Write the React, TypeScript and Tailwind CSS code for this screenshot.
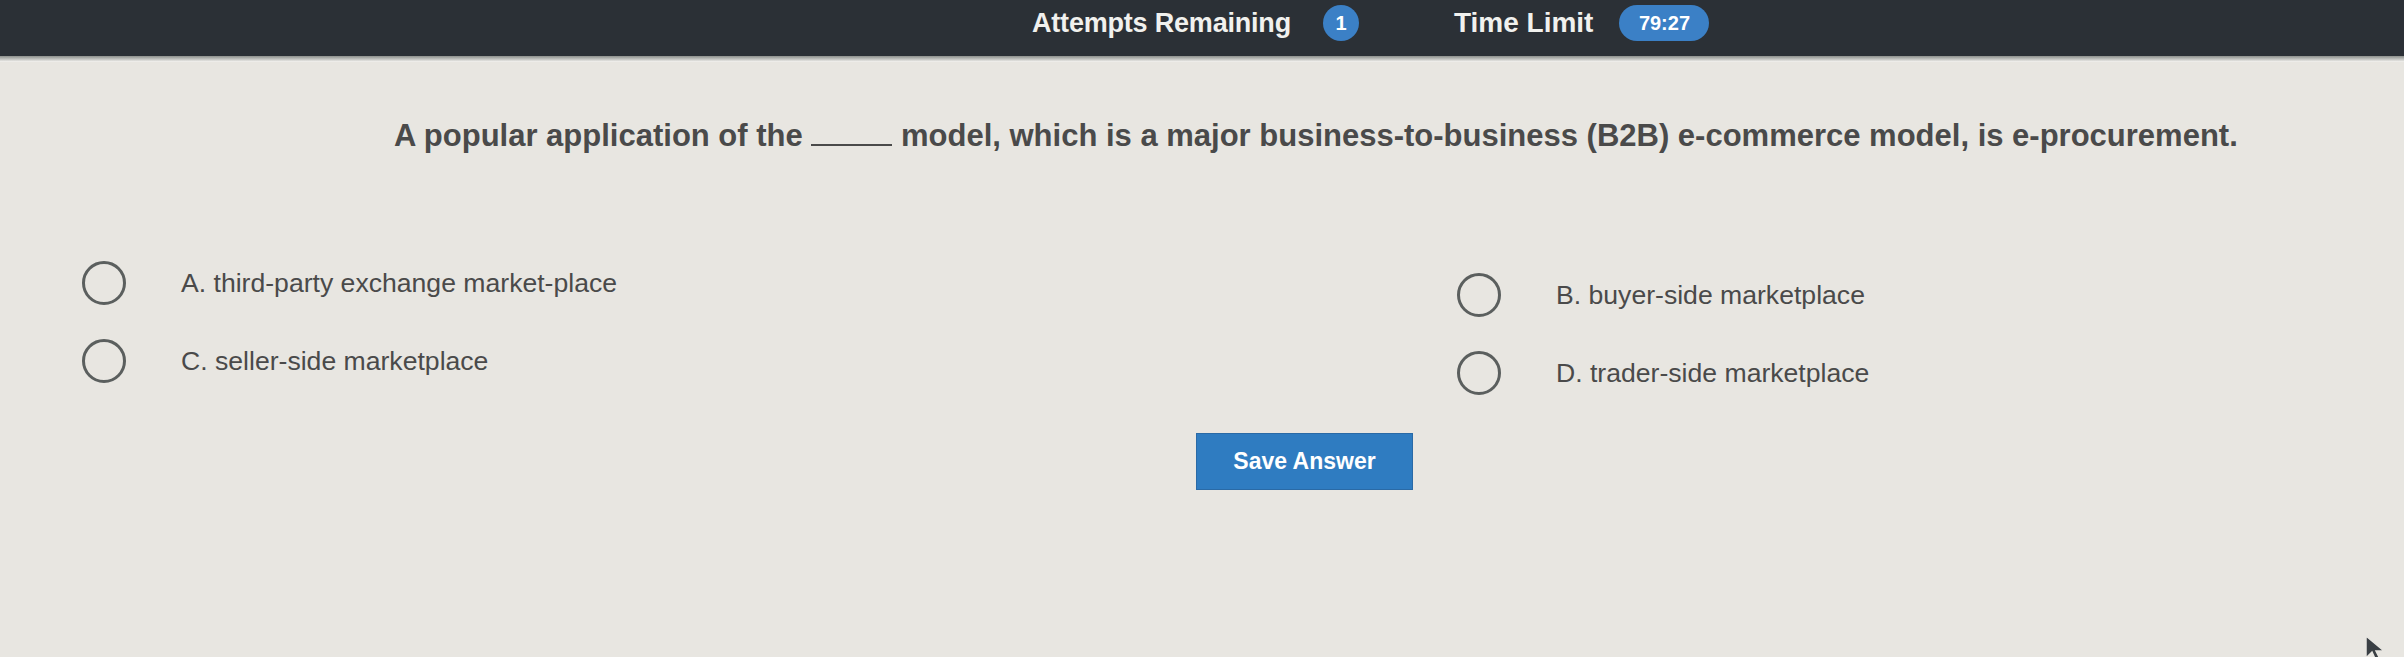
import React from 'react';

const font = { fontFamily: '"Liberation Sans", Arial, sans-serif' };

function Radio() {
  return <span className="inline-block w-[44px] h-[44px] rounded-full border-[3px] border-[#5b5f5e] shrink-0" />;
}

function Option({ label }: { label: string }) {
  return (
    <label className="flex items-center gap-[55px] h-[44px]">
      <Radio />
      <span className="text-[26.6px] text-[#4a4a4a] leading-none">{label}</span>
    </label>
  );
}

export default function App() {
  return (
    <div className="relative w-[2404px] h-[657px] overflow-hidden bg-[#e8e6e1]" style={font}>
      {/* Header: attempts + timer */}
      <div className="h-[56px] bg-[#2b3036] flex items-center pl-[1032px] pb-[10px]">
        <span className="text-[27px] font-bold text-[#f1f1ee] tracking-[-0.2px]">Attempts Remaining</span>
        <span className="ml-[32px] w-[36px] h-[36px] rounded-full bg-[#3b80c6] text-white text-[20px] font-bold flex items-center justify-center">1</span>
        <span className="ml-[95px] text-[28px] font-bold text-[#f1f1ee]">Time Limit</span>
        <span className="ml-[26px] w-[90px] h-[36px] rounded-full bg-[#3b80c6] text-white text-[20px] font-bold flex items-center justify-center">79:27</span>
      </div>
      <div className="h-[6px] bg-gradient-to-b from-[#8c8f8c] to-[#f6f5f2]" />

      {/* Question */}
      <div className="pl-[394px] pt-[58px]">
        <p className="text-[31px] font-bold text-[#4a4a4a] leading-none">
          A popular application of the <span className="inline-block w-[81px] border-b-2 border-[#4a4a4a]" /> model, which is a major business-to-business (B2B) e-commerce model, is e-procurement.
        </p>
      </div>

      {/* Options */}
      <div className="grid grid-cols-[1373px_1fr] pl-[82px] pt-[110px]">
        <div className="flex flex-col gap-[34px]">
          <Option label="A. third-party exchange market-place" />
          <Option label="C. seller-side marketplace" />
        </div>
        <div className="flex flex-col gap-[34px] pt-[12px] pl-[2px]">
          <Option label="B. buyer-side marketplace" />
          <Option label="D. trader-side marketplace" />
        </div>
      </div>

      {/* Save */}
      <div className="flex pl-[1196px] pt-[38px]">
        <button className="w-[217px] h-[57px] bg-[#2f7cc1] border border-[#2a6aa6] text-white text-[23px] font-bold">
          Save Answer
        </button>
      </div>

      {/* mouse cursor */}
      <svg className="absolute left-[2364px] top-[634px]" width="22" height="28" viewBox="0 0 22 28">
        <path d="M2 2 L2 24 L8 18 L12 27 L16 25 L12 17 L20 17 Z" fill="#3a3f44" stroke="#e8e6e1" strokeWidth="1.5" />
      </svg>
    </div>
  );
}
